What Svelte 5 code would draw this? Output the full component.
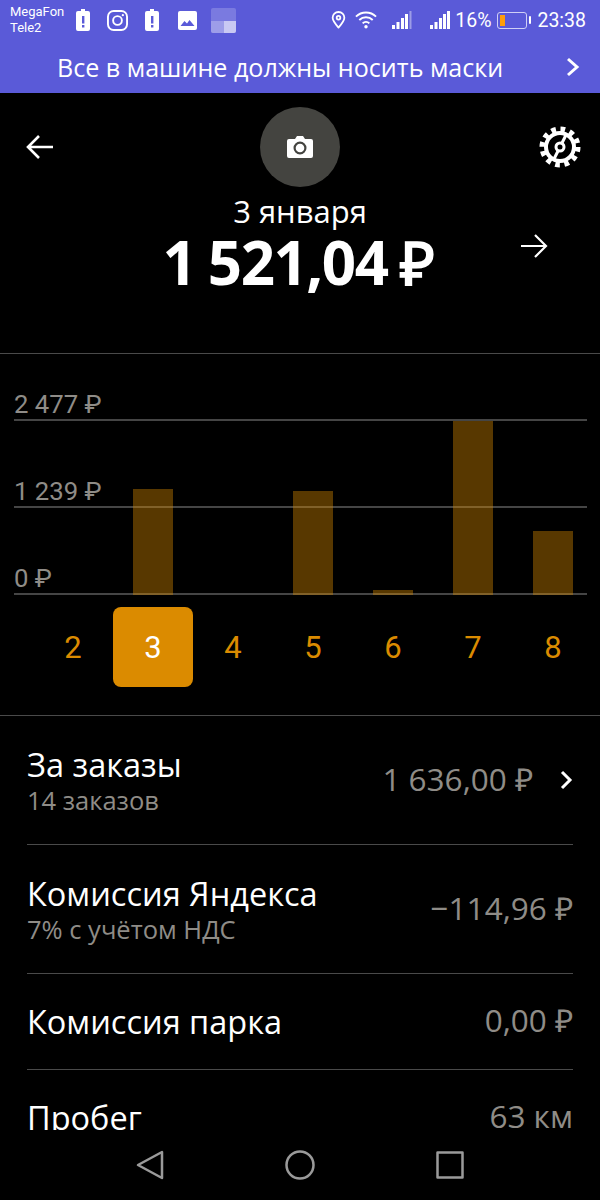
<script>
  const days = [
    { n: 2, h: 0 },
    { n: 3, h: 106 },
    { n: 4, h: 0 },
    { n: 5, h: 104 },
    { n: 6, h: 5 },
    { n: 7, h: 174 },
    { n: 8, h: 64 }
  ];
  const active = 3;
  const scale = ["2 477 ₽", "1 239 ₽", "0 ₽"];
  const rows = [
    { title: "За заказы", sub: "14 заказов", value: "1 636,00 ₽", more: true, h: 129 },
    { title: "Комиссия Яндекса", sub: "7% с учётом НДС", value: "−114,96 ₽", h: 129 },
    { title: "Комиссия парка", value: "0,00 ₽", h: 96 },
    { title: "Пробег", value: "63 км", h: 96 }
  ];
</script>

<div class="screen">
  <header class="top">
    <div class="status">
      <div class="carriers"><span>MegaFon</span><span>Tele2</span></div>
      <div class="notif">
        <svg width="14" height="24" viewBox="0 0 14 24"><path d="M5 1h4v2h3a2 2 0 0 1 2 2v16a2 2 0 0 1-2 2H2a2 2 0 0 1-2-2V5a2 2 0 0 1 2-2h3z" fill="#fff"/><rect x="6" y="8" width="2.4" height="7.5" fill="#5a5ad8"/><rect x="6" y="17" width="2.4" height="2.5" fill="#5a5ad8"/></svg>
        <svg width="21" height="21" viewBox="0 0 22 22" fill="none" stroke="#fff" stroke-width="2"><rect x="1" y="1" width="20" height="20" rx="6"/><circle cx="11" cy="11" r="4.6"/><circle cx="16.6" cy="5.4" r="1.2" fill="#fff" stroke="none"/></svg>
        <svg width="14" height="24" viewBox="0 0 14 24"><path d="M5 1h4v2h3a2 2 0 0 1 2 2v16a2 2 0 0 1-2 2H2a2 2 0 0 1-2-2V5a2 2 0 0 1 2-2h3z" fill="#fff"/><rect x="6" y="8" width="2.4" height="7.5" fill="#5a5ad8"/><rect x="6" y="17" width="2.4" height="2.5" fill="#5a5ad8"/></svg>
        <svg class="pic" width="19" height="19" viewBox="0 0 19 19"><rect width="19" height="19" rx="2" fill="#fff"/><path d="M2.5 15l4-5 2.5 2.5 2.5-3.5 5 6z" fill="#5a5ad8"/></svg>
        <div class="tiles"><i></i><i class="a"></i><i class="b"></i></div>
      </div>
      <div class="sys">
        <svg width="15" height="18" viewBox="0 0 16 20" fill="none" stroke="#fff" stroke-width="2"><path d="M8 18.500C4 14 1.500 11 1.500 7.600a6.500 6.500 0 0 1 13 0C14.500 11 12 14 8 18.500z" stroke-linejoin="round"/><circle cx="8" cy="7.500" r="2"/></svg>
        <svg class="wifi" width="22" height="18" viewBox="0 0 23 18" fill="none" stroke="#fff" stroke-width="2"><path d="M1 5.500a15 15 0 0 1 21 0M4.500 9a10 10 0 0 1 14 0M8 12.500a5 5 0 0 1 7 0"/><circle cx="11.500" cy="16" r="1.800" fill="#fff" stroke="none"/></svg>
        <svg class="sig1" width="20" height="18" viewBox="0 0 20 18" fill="#fff"><rect x="0" y="14" width="3" height="4"/><rect x="4.500" y="11" width="3" height="7"/><rect x="9" y="7" width="3" height="11"/><rect x="13" y="3" width="3" height="15"/><rect x="17.500" y="0" width="2" height="18" opacity=".4"/></svg>
        <svg class="sig2" width="20" height="18" viewBox="0 0 20 18" fill="#fff"><rect x="0" y="14" width="3" height="4"/><rect x="4.500" y="11" width="3" height="7"/><rect x="9" y="7" width="3" height="11"/><rect x="13" y="3" width="3" height="15"/><rect x="17" y="0" width="3" height="18"/></svg>
        <span class="pct">16%</span>
        <div class="batt"><div class="level"></div></div>
        <div class="tip"></div>
        <span class="clock">23:38</span>
      </div>
    </div>
    <div class="banner">
      <span>Все в машине должны носить маски</span>
      <svg width="14" height="20" viewBox="0 0 14 20" fill="none" stroke="#fff" stroke-width="3"><path d="M2 2l9 8-9 8"/></svg>
    </div>
  </header>

  <section class="summary">
    <div class="icons">
      <svg width="28" height="26" viewBox="0 0 28 26" fill="none" stroke="#fff" stroke-width="2.600"><path d="M27 13H2M13 2L2 13l11 11"/></svg>
      <div class="photo">
        <svg width="26" height="22" viewBox="0 0 26 22"><path d="M8 3l2-3h6l2 3h6a2 2 0 0 1 2 2v15a2 2 0 0 1-2 2H2a2 2 0 0 1-2-2V5a2 2 0 0 1 2-2z" fill="#fff"/><circle cx="13" cy="12" r="5.400" fill="none" stroke="#444440" stroke-width="2.200"/></svg>
      </div>
      <svg class="gear" width="42" height="42" viewBox="0 0 42 42" fill="none" stroke="#fff">
        <circle cx="21" cy="21" r="14" stroke-width="4"/>
        <circle cx="21" cy="21" r="17.500" stroke-width="6" stroke-dasharray="4.580 4.580"/>
        <circle cx="21" cy="21" r="4" stroke-width="3"/>
        <path d="M23 17l4-8M19 25l-4 8" stroke-width="3"/>
      </svg>
    </div>
    <div class="date">3 января</div>
    <div class="total-row">
      <div class="total">1 521,04 ₽</div>
      <svg class="next" width="28" height="26" viewBox="0 0 28 26" fill="none" stroke="#fff" stroke-width="2.200"><path d="M1 13h25M15 2l11 11-11 11"/></svg>
    </div>
  </section>

  <section class="chart">
    <div class="scale">
      {#each scale as label}
        <div class="tick"><span>{label}</span></div>
      {/each}
    </div>
    <div class="bars">
      {#each days as d}
        <div class="col"><div class="bar" style="height: {d.h}px"></div></div>
      {/each}
    </div>
    <div class="days">
      {#each days as d}
        <div class="day" class:on={d.n === active}>{d.n}</div>
      {/each}
    </div>
  </section>

  <section class="list">
    {#each rows as r}
      <div class="row" style="height: {r.h}px">
        <div class="left">
          <div class="name">{r.title}</div>
          {#if r.sub}<div class="sub">{r.sub}</div>{/if}
        </div>
        <div class="val">{r.value}</div>
        {#if r.more}
          <svg class="more" width="13" height="20" viewBox="0 0 13 20" fill="none" stroke="#fff" stroke-width="3"><path d="M2 2l8 8-8 8"/></svg>
        {/if}
      </div>
    {/each}
  </section>

  <nav class="nav">
    <svg width="28" height="30" viewBox="0 0 28 30" fill="none" stroke="#9a9a9a" stroke-width="2.500" stroke-linejoin="round"><path d="M26 2v26L2 15z"/></svg>
    <svg width="30" height="30" viewBox="0 0 30 30" fill="none" stroke="#9a9a9a" stroke-width="2.500"><circle cx="15" cy="15" r="13.500"/></svg>
    <svg width="28" height="28" viewBox="0 0 28 28" fill="none" stroke="#9a9a9a" stroke-width="2.500" stroke-linejoin="round"><rect x="1.500" y="1.500" width="25" height="25"/></svg>
  </nav>
</div>

<style>
  :global(body) {
    margin: 0;
    background: #000;
  }

  .screen {
    position: relative;
    width: 600px;
    height: 1200px;
    overflow: hidden;
    background: #000;
    color: #fff;
    font-family: "Open Sans", sans-serif;
  }

  .top {
    height: 93px;
    background: #5a5ad8;
  }

  .status {
    display: flex;
    align-items: center;
    height: 40px;
    padding: 0 14px 0 10px;
    font-family: Roboto, sans-serif;
  }

  .carriers {
    display: flex;
    flex-direction: column;
    width: 66px;
    font-size: 13px;
    line-height: 16px;
  }

  .notif {
    display: flex;
    align-items: center;
    gap: 17px;
  }

  .pic {
    margin-left: 2px;
  }

  .tiles {
    display: grid;
    grid-template-columns: 1fr 1fr;
    grid-template-rows: 13px 12px;
    width: 25px;
    height: 25px;
    margin-left: -3px;
    border-radius: 2px;
    overflow: hidden;
    background: #7a7ae0;
  }

  .tiles i:first-child {
    grid-column: 1 / 3;
  }

  .tiles .a {
    background: #9d9de9;
  }

  .tiles .b {
    background: #c9c9f3;
  }

  .sys {
    display: flex;
    align-items: center;
    margin-left: auto;
    font-size: 19.500px;
  }

  .wifi {
    margin-left: 9px;
  }

  .sig1 {
    margin-left: 15px;
  }

  .sig2 {
    margin-left: 18px;
  }

  .pct {
    margin-left: 5px;
  }

  .batt {
    box-sizing: border-box;
    width: 30px;
    height: 17px;
    margin-left: 6px;
    padding: 2px;
    border: 1px solid #cfcff5;
    border-radius: 3px;
  }

  .level {
    width: 5px;
    height: 100%;
    background: #ff9d0a;
  }

  .tip {
    width: 2px;
    height: 8px;
    margin-left: 2px;
    background: #fff;
    border-radius: 1px;
  }

  .clock {
    margin-left: 6px;
  }

  .banner {
    display: flex;
    align-items: center;
    justify-content: space-between;
    box-sizing: border-box;
    height: 53px;
    padding: 1px 20px 0 57px;
    font-size: 25.100px;
    white-space: nowrap;
  }

  .summary {
    box-sizing: border-box;
    height: 261px;
    border-bottom: 1px solid #4a4a4a;
  }

  .icons {
    display: grid;
    grid-template-columns: 1fr 80px 1fr;
    align-items: center;
    padding: 14px 19px 0 26px;
  }

  .icons .gear {
    justify-self: end;
  }

  .photo {
    display: flex;
    align-items: center;
    justify-content: center;
    width: 80px;
    height: 80px;
    margin-left: -4px;
    border-radius: 50%;
    background: #444440;
  }

  .date {
    margin-top: 5px;
    padding-bottom: 1px;
    text-align: center;
    font-size: 31px;
    line-height: 38px;
  }

  .total-row {
    position: relative;
    text-align: center;
  }

  .total {
    padding-right: 4px;
    font-size: 60px;
    font-weight: 700;
    line-height: 62px;
    letter-spacing: -1.500px;
    word-spacing: -1.500px;
  }

  .next {
    position: absolute;
    top: 2px;
    left: 520px;
  }

  .chart {
    position: relative;
    box-sizing: border-box;
    height: 362px;
    border-bottom: 1px solid #4a4a4a;
  }

  .scale {
    padding: 30px 13px 0 14px;
  }

  .tick {
    display: flex;
    align-items: flex-end;
    box-sizing: border-box;
    height: 87px;
    border-bottom: 2px solid #454545;
    color: #8f8c87;
    font-family: Roboto, sans-serif;
    font-size: 25.700px;
    line-height: 30px;
  }

  .tick:first-child {
    height: 37px;
  }

  .bars {
    position: absolute;
    top: 65px;
    left: 33px;
    display: grid;
    grid-template-columns: repeat(7, 80px);
    height: 176px;
  }

  .col {
    display: flex;
    align-items: flex-end;
    justify-content: center;
  }

  .bar {
    width: 40px;
    background: rgba(219, 139, 0, 0.4);
  }

  .days {
    display: grid;
    grid-template-columns: repeat(7, 80px);
    margin: 12px 0 0 33px;
  }

  .day {
    display: flex;
    align-items: center;
    justify-content: center;
    height: 80px;
    border-radius: 8px;
    color: #db8b00;
    font-family: Roboto, sans-serif;
    font-size: 31px;
  }

  .day.on {
    background: #db8b00;
    color: #fff;
  }

  .list {
    padding: 0 27px;
  }

  .row {
    position: relative;
    display: flex;
    align-items: center;
    justify-content: space-between;
    box-sizing: border-box;
    border-bottom: 1px solid #4a4a4a;
  }

  .name {
    font-size: 32.500px;
    line-height: 39px;
  }

  .sub {
    color: #8f8c87;
    font-size: 25.500px;
    line-height: 32px;
  }

  .val {
    margin-bottom: 4px;
    color: #8f8c87;
    font-size: 31.500px;
  }

  .row:has(.more) .val {
    margin-right: 40px;
    margin-left: auto;
  }

  .more {
    position: absolute;
    top: 54px;
    right: 0;
  }

  .nav {
    position: absolute;
    left: 0;
    right: 0;
    bottom: 0;
    display: flex;
    align-items: center;
    justify-content: space-between;
    box-sizing: border-box;
    height: 70px;
    padding: 0 136px;
    background: #000;
  }
</style>
